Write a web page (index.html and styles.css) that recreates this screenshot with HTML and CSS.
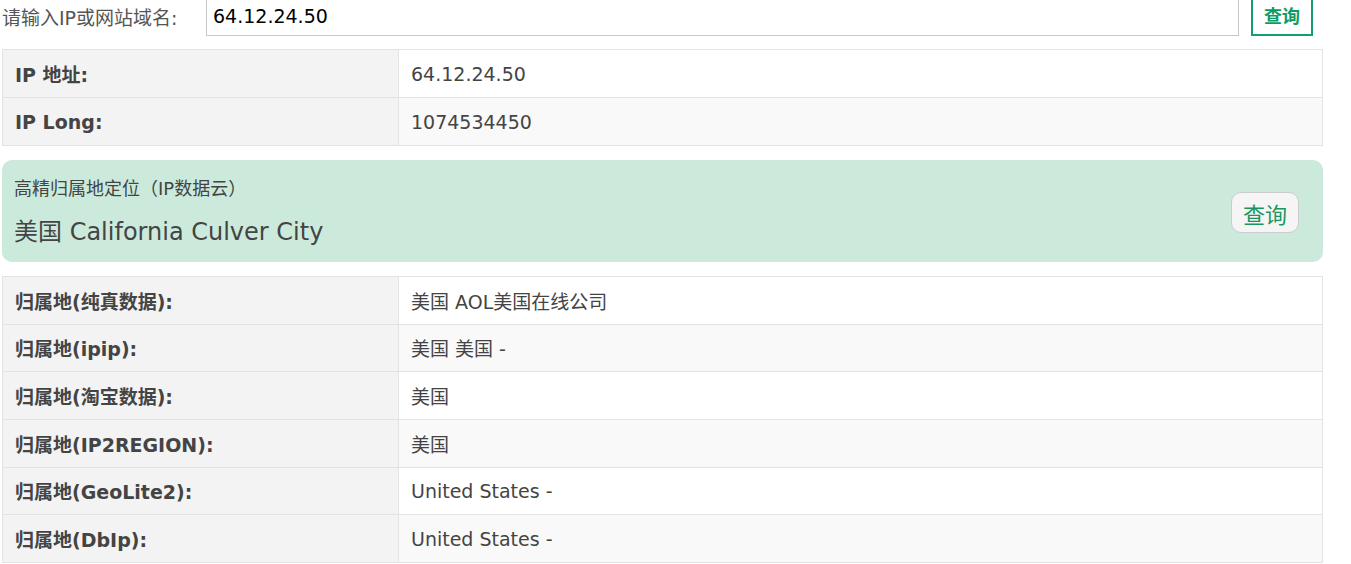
FILE: index.html
```html
<!DOCTYPE html>
<html lang="zh-CN">
<head>
<meta charset="UTF-8">
<meta name="viewport" content="width=device-width, initial-scale=1.0">
<title>IP查询</title>
<link rel="stylesheet" href="styles.css">
</head>
<body>
<div class="wrap">
  <form class="search">
    <label class="search-label" for="ip">请输入IP或网站域名:</label>
    <input id="ip" class="search-input" type="text" value="64.12.24.50">
    <button type="button" class="search-btn">查询</button>
  </form>

  <table class="info">
    <tr><th>IP 地址:</th><td>64.12.24.50</td></tr>
    <tr><th>IP Long:</th><td>1074534450</td></tr>
  </table>

  <div class="cloud">
    <div class="cloud-text">
      <div class="cloud-title">高精归属地定位（IP数据云）</div>
      <div class="cloud-place">美国 California Culver City</div>
    </div>
    <button type="button" class="cloud-btn">查询</button>
  </div>

  <table class="info info-sources">
    <tr><th>归属地(纯真数据):</th><td>美国 AOL美国在线公司</td></tr>
    <tr><th>归属地(ipip):</th><td>美国 美国 -</td></tr>
    <tr><th>归属地(淘宝数据):</th><td>美国</td></tr>
    <tr><th>归属地(IP2REGION):</th><td>美国</td></tr>
    <tr><th>归属地(GeoLite2):</th><td>United States -</td></tr>
    <tr><th>归属地(DbIp):</th><td>United States -</td></tr>
  </table>
</div>
</body>
</html>
```

FILE: styles.css
```css
body {
  margin: 0;
  font-family: "DejaVu Sans", Verdana, "Noto Sans CJK SC", sans-serif;
  color: #444;
  background: #fff;
}

.wrap {
  width: 1321px;
  padding-left: 2px;
}

/* barra de busqueda */
.search {
  display: flex;
  align-items: center;
  height: 40px;
  margin: -4px 0 13px 0;
}

.search-label {
  width: 204px;
  font-size: 19px;
  color: #555;
  white-space: nowrap;
}

.search-input {
  box-sizing: border-box;
  width: 1033px;
  height: 40px;
  margin: 0;
  padding: 0 6px;
  border: 1px solid #c8c8c8;
  font-family: inherit;
  font-size: 19px;
  color: #000;
  outline: none;
}

.search-btn {
  box-sizing: border-box;
  width: 62px;
  height: 40px;
  margin-left: 12px;
  padding: 0 0 2px 0;
  border: 2px solid #12a06a;
  background: #fff;
  color: #0e9a62;
  font-family: inherit;
  font-size: 18px;
  font-weight: bold;
  cursor: pointer;
}

/* tablas */
.info {
  width: 1321px;
  border-collapse: collapse;
  font-size: 19px;
}

.info th,
.info td {
  height: 48px;
  padding: 0 12px;
  border: 1px solid #e3e3e3;
  text-align: left;
  box-sizing: border-box;
}

.info-sources th,
.info-sources td {
  height: 47.67px;
}

.info th {
  width: 396px;
  background: #f3f3f3;
  font-weight: bold;
  color: #444;
}

.info tr:nth-child(odd) td {
  background: #fff;
}

.info tr:nth-child(even) td {
  background: #f9f9f9;
}

/* tarjeta verde */
.cloud {
  display: flex;
  align-items: center;
  justify-content: space-between;
  margin: 14px 0;
  padding: 17px 24px 14px 12px;
  background: #cbeadc;
  border-radius: 10px;
}

.cloud-title {
  font-size: 18px;
  line-height: 24px;
}

.cloud-place {
  margin-top: 15px;
  font-size: 24px;
  line-height: 32px;
}

.cloud-btn {
  box-sizing: border-box;
  width: 68px;
  height: 41px;
  padding: 0;
  border: 1px solid #ccc;
  border-radius: 10px;
  background: #f5f5f5;
  color: #17975f;
  font-family: inherit;
  font-size: 22px;
  cursor: pointer;
}
```
